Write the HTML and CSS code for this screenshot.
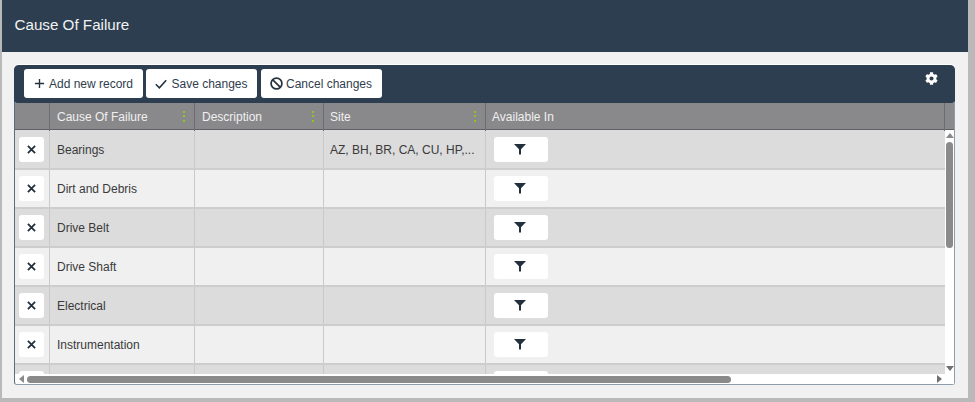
FILE: index.html
```html
<!DOCTYPE html>
<html lang="en">
<head>
<meta charset="utf-8">
<title>Cause Of Failure</title>
<link rel="stylesheet" href="styles.css">
</head>
<body>
<svg class="defs" width="0" height="0" aria-hidden="true">
  <symbol id="i-x" viewBox="0 0 10 10"><path d="M1 1l8 8M9 1l-8 8" fill="none" stroke="currentColor" stroke-width="2"/></symbol>
  <symbol id="i-filter" viewBox="0 0 12 12"><path d="M0 1h12L7 6.2v5.4H5V6.2z" fill="currentColor"/></symbol>
</svg>
<main class="panel">
  <header class="title-bar">Cause Of Failure</header>
  <section class="content">
    <div class="grid">
      <div class="toolbar">
        <button class="tool-btn btn-add"><svg class="ico" viewBox="0 0 12 12"><path d="M6 1v10M1 6h10" fill="none" stroke="currentColor" stroke-width="1.5"/></svg>Add new record</button>
        <button class="tool-btn btn-save"><svg class="ico ico-check" viewBox="0 0 12 10"><path d="M0.8 5.2l3.6 3.6L11.2 1.2" fill="none" stroke="currentColor" stroke-width="1.6"/></svg>Save changes</button>
        <button class="tool-btn btn-cancel"><svg class="ico ico-ban" viewBox="0 0 12 12"><circle cx="6" cy="6" r="5" fill="none" stroke="currentColor" stroke-width="1.6"/><path d="M2.6 2.6l6.8 6.8" stroke="currentColor" stroke-width="1.6"/></svg>Cancel changes</button>
        <svg class="gear" viewBox="0 0 512 512"><path fill="currentColor" d="M487.4 315.7l-42.6-24.6c4.3-23.2 4.3-47 0-70.2l42.6-24.6c4.9-2.8 7.1-8.6 5.5-14-11.1-35.6-30-67.8-54.7-94.6-3.8-4.1-10-5.1-14.8-2.3L380.8 110c-17.9-15.4-38.5-27.3-60.8-35.1V25.8c0-5.6-3.9-10.5-9.4-11.7-36.7-8.2-74.3-7.8-109.2 0-5.5 1.2-9.4 6.1-9.4 11.7V75c-22.2 7.9-42.8 19.8-60.8 35.1L88.7 85.5c-4.9-2.8-11-1.9-14.8 2.3-24.7 26.7-43.6 58.9-54.7 94.6-1.7 5.4.6 11.2 5.5 14L67.3 221c-4.3 23.2-4.3 47 0 70.2l-42.6 24.6c-4.9 2.8-7.1 8.6-5.5 14 11.1 35.6 30 67.8 54.7 94.6 3.8 4.1 10 5.1 14.8 2.3l42.6-24.6c17.9 15.4 38.5 27.3 60.8 35.1v49.2c0 5.6 3.9 10.5 9.4 11.7 36.7 8.2 74.3 7.8 109.2 0 5.5-1.2 9.4-6.1 9.4-11.7v-49.2c22.2-7.9 42.8-19.8 60.8-35.1l42.6 24.6c4.9 2.8 11 1.9 14.8-2.3 24.7-26.7 43.6-58.9 54.7-94.6 1.5-5.5-.7-11.3-5.6-14.1zM256 336c-44.1 0-80-35.9-80-80s35.9-80 80-80 80 35.9 80 80-35.9 80-80 80z"/></svg>
      </div>
      <div class="head cols">
        <div class="hc"></div>
        <div class="hc">Cause Of Failure<i class="dots"></i></div>
        <div class="hc">Description<i class="dots"></i></div>
        <div class="hc hc-tight">Site<i class="dots"></i></div>
        <div class="hc hc-tight">Available In</div>
        <div class="hc hc-end"></div>
      </div>
      <div class="body">
        <div class="rows">
          <div class="row cols"><div class="c"><button class="del"><svg class="ico-x"><use href="#i-x"/></svg></button></div><div class="c">Bearings</div><div class="c"></div><div class="c c-tight">AZ, BH, BR, CA, CU, HP,...</div><div class="c"><button class="flt"><svg class="ico-f"><use href="#i-filter"/></svg></button></div></div>
          <div class="row cols"><div class="c"><button class="del"><svg class="ico-x"><use href="#i-x"/></svg></button></div><div class="c">Dirt and Debris</div><div class="c"></div><div class="c"></div><div class="c"><button class="flt"><svg class="ico-f"><use href="#i-filter"/></svg></button></div></div>
          <div class="row cols"><div class="c"><button class="del"><svg class="ico-x"><use href="#i-x"/></svg></button></div><div class="c">Drive Belt</div><div class="c"></div><div class="c"></div><div class="c"><button class="flt"><svg class="ico-f"><use href="#i-filter"/></svg></button></div></div>
          <div class="row cols"><div class="c"><button class="del"><svg class="ico-x"><use href="#i-x"/></svg></button></div><div class="c">Drive Shaft</div><div class="c"></div><div class="c"></div><div class="c"><button class="flt"><svg class="ico-f"><use href="#i-filter"/></svg></button></div></div>
          <div class="row cols"><div class="c"><button class="del"><svg class="ico-x"><use href="#i-x"/></svg></button></div><div class="c">Electrical</div><div class="c"></div><div class="c"></div><div class="c"><button class="flt"><svg class="ico-f"><use href="#i-filter"/></svg></button></div></div>
          <div class="row cols"><div class="c"><button class="del"><svg class="ico-x"><use href="#i-x"/></svg></button></div><div class="c">Instrumentation</div><div class="c"></div><div class="c"></div><div class="c"><button class="flt"><svg class="ico-f"><use href="#i-filter"/></svg></button></div></div>
          <div class="row cols"><div class="c"><button class="del"></button></div><div class="c"></div><div class="c"></div><div class="c"></div><div class="c"><button class="flt"></button></div></div>
        </div>
        <div class="vbar">
          <span class="arr arr-up"></span>
          <span class="vthumb"></span>
          <span class="arr arr-down"></span>
        </div>
      </div>
      <div class="hbar">
        <span class="arr arr-left"></span>
        <span class="htrack"><span class="hthumb"></span></span>
        <span class="arr arr-right"></span>
      </div>
    </div>
  </section>
</main>
</body>
</html>
```

FILE: styles.css
```css
* { box-sizing: border-box; }
html, body { height: 100%; }
body {
  margin: 0;
  padding: 0 7px 4px 2px;
  background: #b9b9b9;
  font-family: "Liberation Sans", Arial, sans-serif;
  font-size: 12px;
  color: #333;
  overflow: hidden;
}
.defs { position: absolute; }
.panel {
  height: 100%;
  background: #f1f1f1;
  display: flex;
  flex-direction: column;
}
.title-bar {
  height: 52px;
  background: #2c3e50;
  color: #f2f2f2;
  font-size: 15.2px;
  line-height: 49px;
  padding-left: 12.5px;
  flex: none;
}
.content {
  flex: 1;
  padding: 13px 13px 13px 12px;
  min-height: 0;
}
.grid {
  height: 320px;
  display: flex;
  flex-direction: column;
  background: #fff;
  border-left: 1px solid #5b6d7e;
  border-right: 1px solid #8f9cab;
  border-bottom: 1px solid #8f9cab;
  border-radius: 5px 5px 3px 3px;
  box-shadow: 0 -1px 0 #fff;
}
.toolbar {
  height: 38px;
  flex: none;
  margin: 0 -1px;
  background: #2c3e50;
  border-radius: 5px 5px 3px 3px;
  padding: 4px 10px 0 9.5px;
  display: flex;
  align-items: flex-start;
  gap: 3.5px;
}
.tool-btn {
  height: 29px;
  border: 0;
  border-radius: 3px;
  background: #fff;
  color: #2f3d4c;
  font: 12px "Liberation Sans", Arial, sans-serif;
  padding: 0;
  display: flex;
  align-items: center;
  justify-content: center;
  gap: 4px;
}
.btn-add { width: 119px; padding-left: 1px; }
.btn-save { width: 111px; }
.btn-cancel { width: 121px; gap: 3px; }
.ico { width: 11px; height: 11px; flex: none; color: #26333f; }
.ico-check { width: 12px; height: 10px; }
.ico-ban { width: 13px; height: 13px; }
.gear {
  width: 13px;
  height: 13px;
  margin: 3px 7px 0 auto;
  color: #fff;
  flex: none;
}
.cols {
  display: grid;
  grid-template-columns: 35px 145px 129px 162px 459px 9px;
}
.head {
  height: 27px;
  flex: none;
  background: #89898b;
  color: #f0f0f0;
  border-bottom: 1px solid #5f6264;
}
.hc {
  position: relative;
  border-right: 1px solid #6b6e70;
  line-height: 28px;
  padding-left: 7px;
}
.hc-tight { padding-left: 6px; }
.hc-end { border-right: 0; }
.dots {
  position: absolute;
  right: 9px;
  top: 8px;
  width: 2px;
  height: 11px;
  background: repeating-linear-gradient(#8fc31f 0 2px, transparent 2px 4.5px);
}
.body {
  height: 244px;
  flex: none;
  display: flex;
  min-height: 0;
}
.rows {
  width: 930px;
  flex: none;
  overflow: hidden;
  padding-top: 1px;
  background: #dcdcdc;
}
.row {
  height: 39px;
  grid-template-columns: 35px 145px 129px 162px 459px;
  border-bottom: 2px solid #cdcdcd;
  background: #dcdcdc;
}
.row:nth-child(even) { background: #f0f0f0; }
.c {
  border-right: 1px solid #c9c9c9;
  padding: 0 7px;
  line-height: 39px;
  color: #3a3a3a;
  white-space: nowrap;
  overflow: hidden;
  min-width: 0;
}
.c:last-child { border-right: 0; }
.c:first-child { padding: 6px 0 0 4px; }
.c-tight { padding-left: 6px; }
.del, .flt {
  display: flex;
  align-items: center;
  justify-content: center;
  height: 25px;
  border: 0;
  border-radius: 3px;
  background: #fff;
  color: #22303d;
  padding: 0;
}
.del { width: 25px; }
.flt { width: 54px; margin: 6px 0 0 1px; }
.ico-x { width: 9px; height: 9px; margin-right: 1px; margin-bottom: 1px; }
.ico-f { width: 12px; height: 12px; margin-right: 2px; margin-bottom: 2px; }
.vbar {
  flex: 1;
  background: #fff;
  display: flex;
  flex-direction: column;
  align-items: center;
  padding: 3px 0;
}
.vthumb {
  width: 7px;
  height: 106px;
  margin-top: 4px;
  border-radius: 4px;
  background: #8a8a8a;
}
.arr { width: 0; height: 0; border-style: solid; border-color: transparent; flex: none; }
.arr-up { border-width: 0 4px 5px; border-bottom-color: #8a8a8a; }
.arr-down { margin-top: auto; border-width: 5px 4px 0; border-top-color: #707070; }
.hbar {
  flex: 1;
  min-height: 0;
  background: #fff;
  display: flex;
  align-items: center;
  padding: 0 12px 0 3px;
  margin-left: 1px;
}
.arr-left { border-width: 4px 5px 4px 0; border-right-color: #8a8a8a; }
.arr-right { border-width: 4px 0 4px 5px; border-left-color: #707070; }
.htrack { flex: 1; padding-left: 3px; }
.hthumb {
  display: block;
  width: 704px;
  height: 7px;
  border-radius: 4px;
  background: #8a8a8a;
}
```
